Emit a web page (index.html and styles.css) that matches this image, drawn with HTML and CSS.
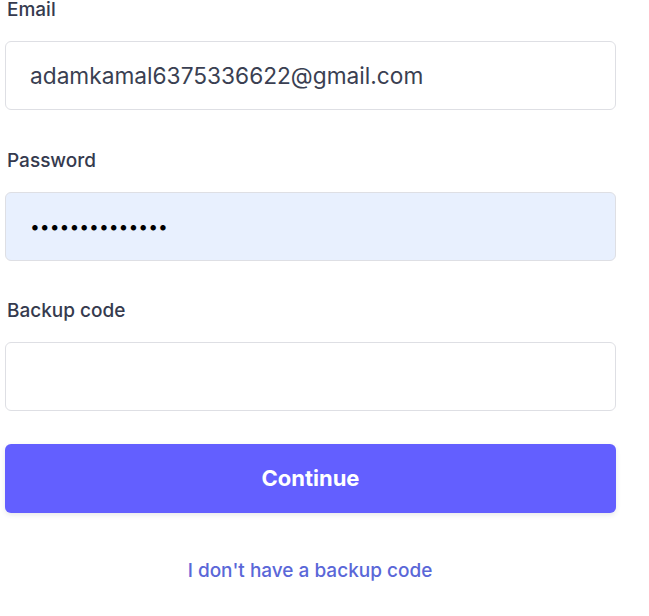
FILE: index.html
```html
<!DOCTYPE html>
<html lang="en">
<head>
<meta charset="utf-8">
<link rel="stylesheet" href="styles.css">
</head>
<body>
<form class="form">
  <div class="field">
    <label class="label">Email</label>
    <div class="input">adamkamal6375336622@gmail.com</div>
  </div>
  <div class="field">
    <label class="label">Password</label>
    <div class="input input-autofill"><span class="dots">••••••••••••••</span></div>
  </div>
  <div class="field">
    <label class="label">Backup code</label>
    <div class="input"></div>
  </div>
  <button type="button" class="btn">Continue</button>
  <div class="link-row"><a class="link">I don't have a backup code</a></div>
</form>
</body>
</html>
```
FILE: styles.css
```css
* { box-sizing: border-box; }
html, body { margin: 0; padding: 0; background: #fff; }
body {
  font-family: Inter, "Noto Sans", sans-serif;
  overflow: hidden;
}
.form {
  width: 612px;
  margin-left: 4px;
  display: flex;
  flex-direction: column;
}
.field {
  display: flex;
  flex-direction: column;
  gap: 21px;
  margin-bottom: 40.5px;
}
.label {
  font-size: 19px;
  line-height: 20px;
  font-weight: 500;
  color: #353a4e;
  padding-left: 3px;
}
.input {
  height: 69px;
  border: 1px solid #dedfe4;
  border-radius: 6px;
  background: #fff;
  margin-left: 1px;
  padding: 0 24px;
  display: flex;
  align-items: center;
  font-size: 22.7px;
  color: #3a3f52;
}
.input-autofill { background: #e8f0fe; }
.dots { font-size: 17.5px; color: #000; letter-spacing: 0; }
.btn {
  margin: -8px 0 0 1px;
  height: 69px;
  border: none;
  border-radius: 6px;
  background: #635fff;
  color: #fff;
  font-family: inherit;
  font-size: 22px;
  font-weight: 700;
  box-shadow: 0 2px 5px rgba(60, 66, 87, 0.12);
}
.link-row {
  margin-top: 46px;
  display: flex;
  justify-content: center;
}
.link {
  font-size: 19px;
  font-weight: 500;
  color: #5a67d8;
}
```
